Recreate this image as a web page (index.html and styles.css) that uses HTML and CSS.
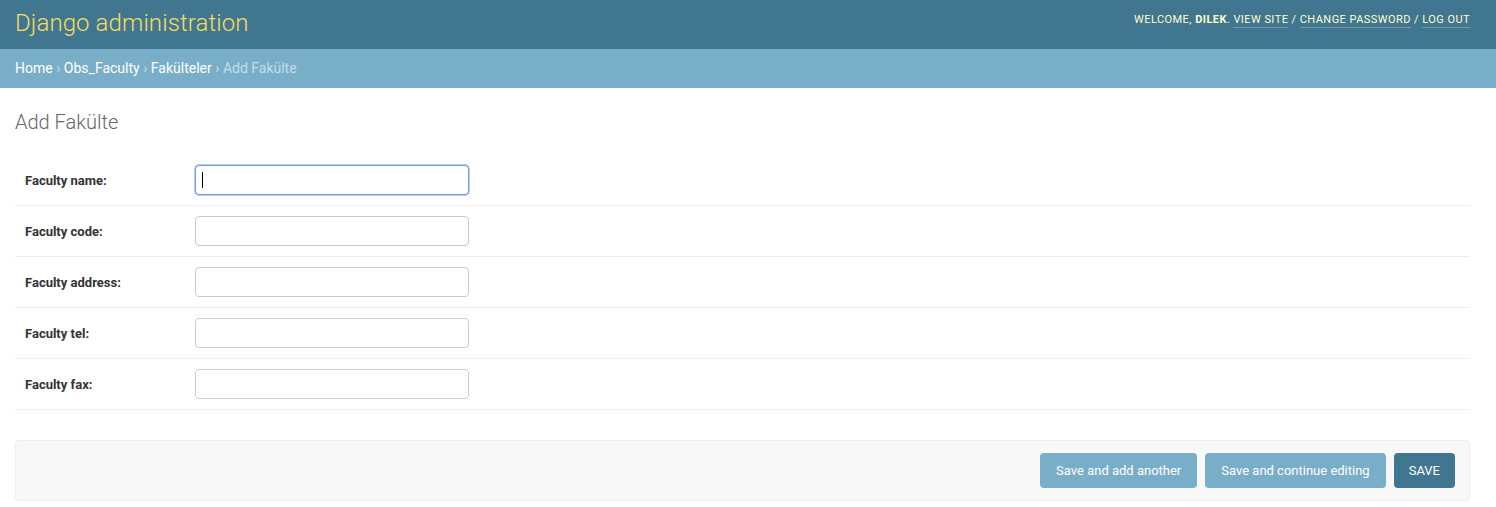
FILE: index.html
```html
<!DOCTYPE html>
<html lang="en">
<head>
<meta charset="utf-8">
<title>Add Fakülte | Django site admin</title>
<link rel="stylesheet" href="styles.css">
</head>
<body>
<div class="header">
  <div class="branding"><h1 class="site-name">Django administration</h1></div>
  <div class="user-tools">
    Welcome, <strong>dilek</strong>.
    <a href="#">View site</a> /
    <a href="#">Change password</a> /
    <a href="#">Log out</a>
  </div>
</div>
<div class="breadcrumbs">
  <a href="#">Home</a> › <a href="#">Obs_Faculty</a> › <a href="#">Fakülteler</a> › Add Fakülte
</div>
<div class="content">
  <h1 class="page-title">Add Fakülte</h1>
  <form>
    <fieldset class="module">
      <div class="form-row">
        <label class="required" for="id_name">Faculty name:</label>
        <span class="input-wrap"><input type="text" id="id_name" class="text-field focused"><span class="caret"></span></span>
      </div>
      <div class="form-row">
        <label class="required" for="id_code">Faculty code:</label>
        <span class="input-wrap"><input type="text" id="id_code" class="text-field"></span>
      </div>
      <div class="form-row">
        <label class="required" for="id_address">Faculty address:</label>
        <span class="input-wrap"><input type="text" id="id_address" class="text-field"></span>
      </div>
      <div class="form-row">
        <label class="required" for="id_tel">Faculty tel:</label>
        <span class="input-wrap"><input type="text" id="id_tel" class="text-field"></span>
      </div>
      <div class="form-row">
        <label class="required" for="id_fax">Faculty fax:</label>
        <span class="input-wrap"><input type="text" id="id_fax" class="text-field"></span>
      </div>
    </fieldset>
    <div class="submit-row">
      <button type="button" class="btn">Save and add another</button>
      <button type="button" class="btn">Save and continue editing</button>
      <button type="button" class="btn btn-default">Save</button>
    </div>
  </form>
</div>
</body>
</html>
```
FILE: styles.css
```css
html, body {
  margin: 0;
  padding: 0;
}
body {
  font-family: Roboto, "Liberation Sans", sans-serif;
  font-size: 14px;
  color: #333;
  background: #fff;
}
a {
  color: inherit;
  text-decoration: none;
}
.header {
  display: flex;
  justify-content: space-between;
  align-items: center;
  height: 49px;
  box-sizing: border-box;
  padding: 0 26px 0 15px;
  background: #417690;
  color: #ffc;
}
.site-name {
  margin: 0 0 4px;
  font-size: 24px;
  font-weight: 300;
  color: #f5dd5d;
  line-height: 28px;
  letter-spacing: 0.1px;
}
.user-tools {
  font-size: 11px;
  letter-spacing: 0.45px;
  text-transform: uppercase;
  line-height: 14px;
  color: #ffc;
  margin-top: -10px;
}
.user-tools strong {
  font-weight: 700;
}
.user-tools a {
  border-bottom: 1px solid rgba(255, 255, 255, 0.25);
  padding-bottom: 1px;
}
.breadcrumbs {
  background: #79aec8;
  padding: 10px 15px;
  height: 39px;
  box-sizing: border-box;
  line-height: 19px;
  font-size: 14px;
  color: #c4dce8;
}
.breadcrumbs a {
  color: #fff;
}
.content {
  padding: 22px 26px 0 15px;
}
.page-title {
  margin: 0 0 21px;
  font-size: 20px;
  line-height: 24px;
  font-weight: 300;
  color: #666;
}
fieldset.module {
  margin: 0 0 30px;
  padding: 0;
  border: none;
}
.form-row {
  display: flex;
  align-items: flex-start;
  padding: 10px;
  border-bottom: 1px solid #eee;
  font-size: 13px;
}
.form-row label {
  width: 160px;
  padding: 9px 10px 0 0;
  line-height: 1;
  font-weight: 700;
  color: #333;
  flex: none;
}
.input-wrap {
  position: relative;
  display: block;
}
.text-field {
  display: block;
  width: 274px;
  height: 30px;
  box-sizing: border-box;
  padding: 5px 6px;
  border: 1px solid #ccc;
  border-radius: 4px;
  font-family: Roboto, "Liberation Sans", sans-serif;
  font-size: 13px;
  background: #fff;
  margin: 0;
  outline: none;
}
.text-field.focused {
  border-color: #6e9be3;
  box-shadow: 0 0 0 1px rgba(126, 165, 232, 0.55);
}
.caret {
  position: absolute;
  left: 7px;
  top: 7px;
  width: 1px;
  height: 16px;
  background: #000;
}
.submit-row {
  display: flex;
  justify-content: flex-end;
  gap: 8px;
  padding: 12px 14px;
  margin: 0;
  background: #f8f8f8;
  border: 1px solid #eee;
  border-radius: 4px;
}
.btn {
  height: 35px;
  padding: 10px 16px;
  border: none;
  border-radius: 4px;
  background: #79aec8;
  color: #fff;
  font-family: Roboto, "Liberation Sans", sans-serif;
  font-size: 13px;
  line-height: 15px;
  cursor: pointer;
}
.btn-default {
  padding: 10px 15px;
  background: #417690;
  text-transform: uppercase;
}
```
